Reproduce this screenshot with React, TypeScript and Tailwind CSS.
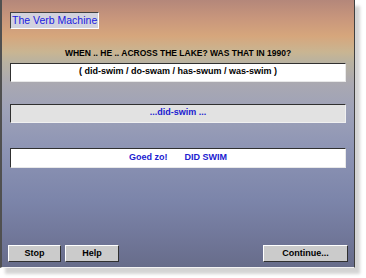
import React from 'react';

const font = { fontFamily: '"Liberation Sans", Arial, sans-serif' };

interface BtnProps {
  label: string;
  className?: string;
}

const Button = ({ label, className = '' }: BtnProps) => (
  <button
    className={`h-[17px] bg-[#cbcbcb] border border-t-white border-l-white border-b-[#303030] border-r-[#303030] text-[9px] font-bold text-black leading-none ${className}`}
  >
    {label}
  </button>
);

const App = () => {
  return (
    <div className="w-[366px] h-[278px] bg-white" style={font}>
      <div className="relative w-[355px] h-[268px] border-l-2 border-r border-b border-l-[#505050] border-r-[#404040] border-b-[#f4f4f4] shadow-[5px_6px_3px_#d4d4d4] bg-[linear-gradient(to_bottom,#b4877a_0px,#c8967c_18px,#d6a67c_36px,#c9b592_52px,#b9b2a0_62px,#a9a8b2_85px,#9ea2b8_110px,#8d94b4_150px,#7c85aa_200px,#707698_240px,#676c8a_268px)] flex flex-col">
        {/* title */}
        <div className="pl-[8px] pt-[7px]">
          <div className="inline-block border border-t-[#404040] border-l-[#404040] border-b-white border-r-white bg-[#d2d2de] px-[1px] h-[17px] text-[10.5px] leading-[15px] text-[#1a1ae0]">
            The Verb Machine
          </div>
        </div>

        {/* question */}
        <div className="mt-[18px] text-center text-[8.5px] font-bold text-black leading-none">
          WHEN .. HE .. ACROSS THE LAKE? WAS THAT IN 1990?
        </div>

        <div className="px-[8px] flex flex-col">
          <div className="mt-[5px] h-[19px] bg-white border border-t-[#303030] border-l-[#303030] border-b-[#e8e8e8] border-r-[#e8e8e8] flex items-center justify-center text-[9px] font-bold text-black">
            ( did-swim / do-swam / has-swum / was-swim )
          </div>

          <div className="mt-[22px] h-[19px] bg-[#e2e2e2] border border-t-[#303030] border-l-[#303030] border-b-[#f0f0f0] border-r-[#f0f0f0] flex items-center justify-center text-[9px] font-bold text-[#2020d0]">
            ...did-swim ...
          </div>

          <div className="mt-[25px] h-[20px] bg-white border border-t-[#303030] border-l-[#303030] border-b-[#e8e8e8] border-r-[#e8e8e8] flex items-center justify-center gap-[17px] text-[9px] font-bold text-[#2020d0]">
            <span>Goed zo!</span>
            <span>DID SWIM</span>
          </div>
        </div>

        <div className="mt-auto mb-[5px] px-[6px] flex items-center">
          <Button label="Stop" className="w-[53px]" />
          <Button label="Help" className="w-[54px] ml-[4px]" />
          <Button label="Continue..." className="w-[85px] ml-auto" />
        </div>
      </div>
    </div>
  );
};

export default App;
